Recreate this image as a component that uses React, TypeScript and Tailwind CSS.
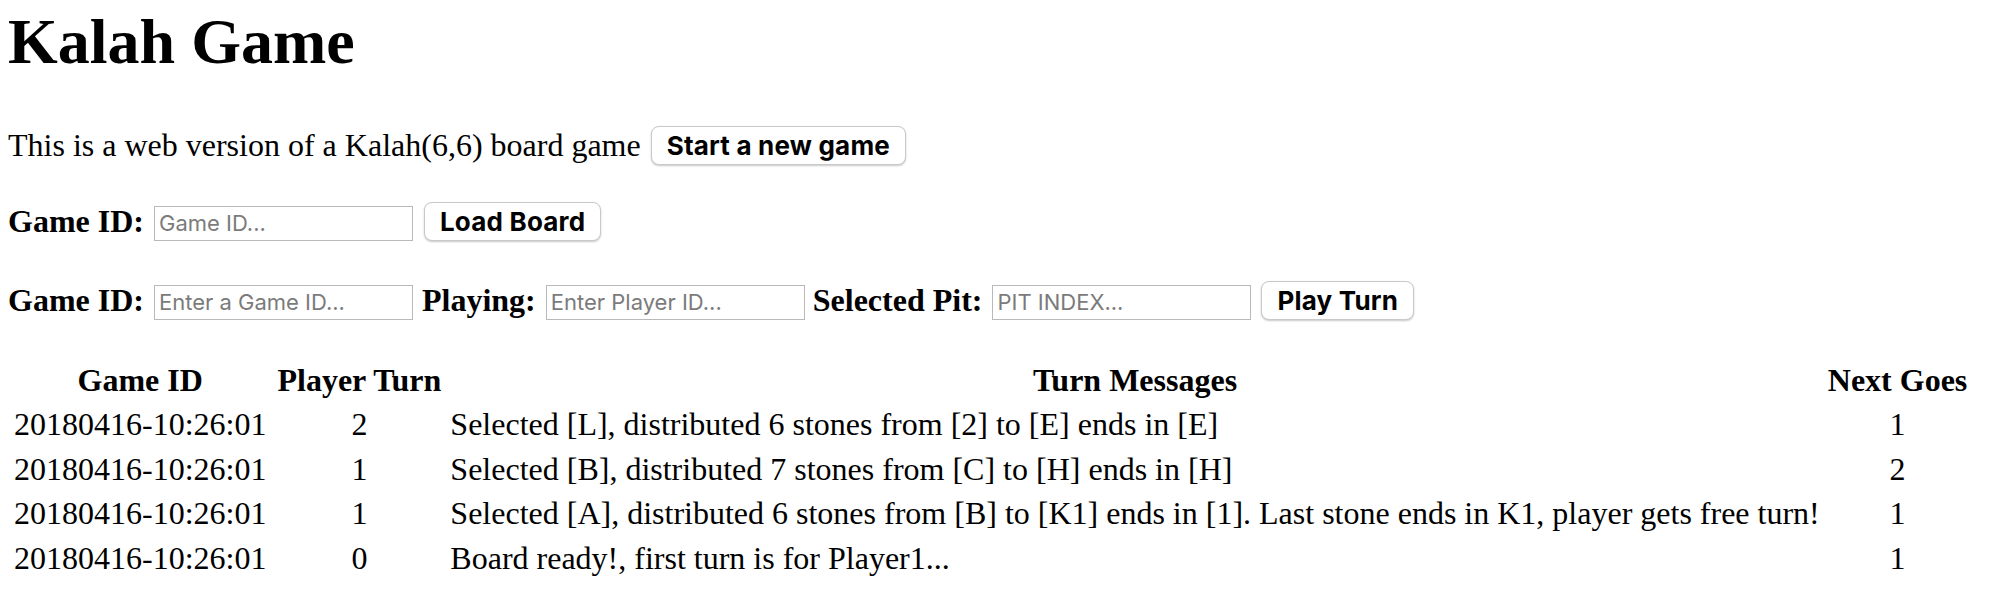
import React from "react";

const serif = "font-['Liberation_Serif','Times_New_Roman',serif]";
const sans = "font-['Inter','Helvetica_Neue',Arial,sans-serif]";

function Btn({ children }: { children: React.ReactNode }) {
  return (
    <button
      className={`${sans} h-[39px] px-[15px] bg-white text-black font-bold text-[26px] tracking-[0.2px] leading-[normal] border border-[#c9c9c9] rounded-[8px] shadow-[0_1px_2px_rgba(0,0,0,0.22)]`}
    >
      {children}
    </button>
  );
}

function Field({ placeholder }: { placeholder: string }) {
  return (
    <input
      placeholder={placeholder}
      className={`${sans} w-[259px] h-[35px] px-[4px] text-[22px] leading-[normal] text-black placeholder:text-[#7b7b7b] border border-[#b9b9b9] bg-white outline-none`}
    />
  );
}

const rows = [
  ["20180416-10:26:01", "2", "Selected [L], distributed 6 stones from [2] to [E] ends in [E]", "1"],
  ["20180416-10:26:01", "1", "Selected [B], distributed 7 stones from [C] to [H] ends in [H]", "2"],
  [
    "20180416-10:26:01",
    "1",
    "Selected [A], distributed 6 stones from [B] to [K1] ends in [1]. Last stone ends in K1, player gets free turn!",
    "1",
  ],
  ["20180416-10:26:01", "0", "Board ready!, first turn is for Player1...", "1"],
];

export default function App() {
  return (
    <div className={`${serif} bg-white text-black min-h-[612px] pl-[8px] text-[32px] leading-[normal]`}>
      <h1 className="pt-[5px] text-[64px] leading-[74px] font-bold">Kalah Game</h1>

      <div className="mt-[46px] flex items-center h-[40px]">
        <span>This is a web version of a Kalah(6,6) board game</span>
        <span className="ml-[10px]">
          <Btn>Start a new game</Btn>
        </span>
      </div>

      <div className="mt-[37px] flex items-center h-[39px]">
        <span className="font-bold">Game ID:</span>
        <span className="ml-[10px]">
          <Field placeholder="Game ID..." />
        </span>
        <span className="ml-[11px]">
          <Btn>Load Board</Btn>
        </span>
      </div>

      <div className="mt-[40px] flex items-center h-[39px]">
        <span className="font-bold">Game ID:</span>
        <span className="ml-[10px]">
          <Field placeholder="Enter a Game ID..." />
        </span>
        <span className="ml-[9px] font-bold">Playing:</span>
        <span className="ml-[10px]">
          <Field placeholder="Enter Player ID..." />
        </span>
        <span className="ml-[8px] font-bold">Selected Pit:</span>
        <span className="ml-[10px]">
          <Field placeholder="PIT INDEX..." />
        </span>
        <span className="ml-[10px]">
          <Btn>Play Turn</Btn>
        </span>
      </div>

      <table className="mt-[36px] border-separate border-spacing-[4px] leading-[36.4px]">
        <thead>
          <tr>
            <th className="py-[2px] pl-[2px] pr-[5px] font-bold text-center">Game ID</th>
            <th className="py-[2px] pl-[2px] pr-[3px] font-bold text-center">Player Turn</th>
            <th className="p-[2px] font-bold text-center">Turn Messages</th>
            <th className="p-[2px] font-bold text-center">Next Goes</th>
          </tr>
        </thead>
        <tbody>
          {rows.map((r, i) => (
            <tr key={i}>
              <td className="py-[2px] pl-[2px] pr-[5px] text-left">{r[0]}</td>
              <td className="py-[2px] pl-[2px] pr-[3px] text-center">{r[1]}</td>
              <td className="p-[2px] text-left">{r[2]}</td>
              <td className="p-[2px] text-center">{r[3]}</td>
            </tr>
          ))}
        </tbody>
      </table>
    </div>
  );
}
